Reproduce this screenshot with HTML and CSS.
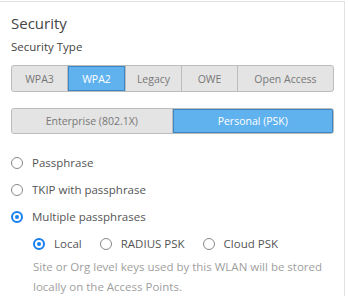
FILE: index.html
```html
<!DOCTYPE html>
<html lang="en">
    <head>
        <meta charset="UTF-8">
        <title>Security</title>
        <link rel="stylesheet" href="styles.css">
    </head>
    <body>
        <div class="card">
            <h3 class="title">Security</h3>
            <div class="label">Security Type</div>

            <div class="seg seg-type">
                <span class="seg-btn w-wpa3">WPA3</span>
                <span class="seg-btn w-wpa2 active">WPA2</span>
                <span class="seg-btn w-legacy">Legacy</span>
                <span class="seg-btn w-owe">OWE</span>
                <span class="seg-btn w-open">Open Access</span>
            </div>

            <div class="seg seg-mode">
                <span class="seg-btn half">Enterprise (802.1X)</span>
                <span class="seg-btn half active">Personal (PSK)</span>
            </div>

            <div class="radios">
                <label class="radio"><span class="dot"></span>Passphrase</label>
                <label class="radio"><span class="dot"></span>TKIP with passphrase</label>
                <label class="radio"><span class="dot on"></span>Multiple passphrases</label>
            </div>

            <div class="sub">
                <div class="sub-row">
                    <label class="radio"><span class="dot on"></span>Local</label>
                    <label class="radio"><span class="dot"></span>RADIUS PSK</label>
                    <label class="radio"><span class="dot"></span>Cloud PSK</label>
                </div>
                <p class="help">Site or Org level keys used by this WLAN will be stored locally on the Access Points.</p>
            </div>
        </div>
    </body>
</html>
```

FILE: styles.css
```css
body {
    margin: 0;
    background: #fff;
    font-family: "Open Sans", "Liberation Sans", sans-serif;
    color: #555;
}

.card {
    width: 345px;
    height: 295px;
    margin-top: 1px;
    border-top: 1px solid #e2e2e2;
    border-right: 1px solid #e2e2e2;
    box-sizing: border-box;
    padding: 11px 0 0 11px;
    overflow: hidden;
}

.title {
    margin: 0;
    font-size: 15px;
    line-height: 20px;
    font-weight: normal;
    color: #444;
}

.label {
    margin-top: 6px;
    font-size: 11.5px;
    line-height: 16px;
    color: #444;
}

.seg {
    display: flex;
    width: 323px;
    box-sizing: border-box;
    border: 1px solid #bcbcbc;
    border-radius: 3px;
    background: #e4e4e4;
    overflow: hidden;
}

.seg-type {
    margin-top: 10px;
    height: 27px;
}

.seg-mode {
    margin-top: 16px;
    height: 26px;
}

.seg-btn {
    display: flex;
    align-items: center;
    justify-content: center;
    font-size: 10.5px;
    color: #777;
    border-right: 1px solid #bcbcbc;
    box-sizing: border-box;
}

.seg-btn:last-child {
    border-right: none;
}

.seg-btn.active {
    background: #60b2ef;
    color: #fff;
    box-shadow: inset 0 0 0 1px #3d86c4;
}

.w-wpa3 { width: 56px; }
.w-wpa2 { width: 58px; }
.w-legacy { width: 56px; }
.w-owe { width: 56px; }
.w-open { flex: 1; }

.half { width: 50%; }

.radios {
    margin-top: 15px;
}

.radio {
    display: flex;
    align-items: center;
    font-size: 11.5px;
    line-height: 16px;
    color: #555;
    height: 27px;
}

.dot {
    width: 12px;
    height: 12px;
    border: 1px solid #888;
    border-radius: 50%;
    box-sizing: border-box;
    margin: 0 9px 0 0;
    position: relative;
}

.dot.on {
    border: 2px solid #1a7ff0;
}

.dot.on::after {
    content: "";
    position: absolute;
    left: 2px;
    top: 2px;
    width: 4px;
    height: 4px;
    border-radius: 50%;
    background: #1a7ff0;
}

.sub {
    padding-left: 22px;
}

.sub-row {
    display: flex;
}

.sub-row .radio {
    margin-right: 18px;
}

.help {
    margin: 0;
    font-size: 11.5px;
    line-height: 20px;
    color: #a0a0a0;
}
```
